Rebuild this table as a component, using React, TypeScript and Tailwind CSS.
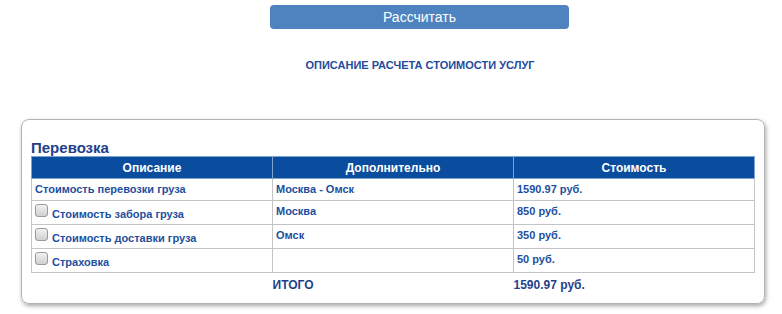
import React from "react";

const Box = () => (
  <span className="inline-block w-[13px] h-[13px] rounded-[3px] border border-[#9a9a9a] bg-gradient-to-b from-[#f2f2f2] to-[#cfcfcf] align-[1px] mr-[4px]" />
);

export default function App() {
  const cell = "border border-[#c4c4c4] px-[3px] text-[11px] font-bold text-[#1d4f9e]";
  return (
    <div className="w-[782px] h-[314px] bg-white overflow-hidden" style={{ fontFamily: '"Liberation Sans", Arial, sans-serif' }}>
      <div className="pt-[5px] pl-[270px]">
        <button className="w-[299px] h-[24px] rounded-[4px] bg-[#4e83bf] text-white text-[14px] leading-[24px] flex items-center justify-center">
          Рассчитать
        </button>
        <div className="w-[300px] text-center mt-[30px] text-[11px] font-bold text-[#1f4c9c] leading-[13px]">
          ОПИСАНИЕ РАСЧЕТА СТОИМОСТИ УСЛУГ
        </div>
      </div>
      <div className="ml-[21px] mt-[47px] w-[744px] h-[185px] border border-[#b4b4b4] rounded-[8px] shadow-[1px_2px_4px_rgba(0,0,0,0.35)] px-[9px] pt-[19px]">
        <div className="text-[15px] font-bold text-[#213f8c] leading-[17px]">Перевозка</div>
        <table className="w-[723px] border-collapse table-fixed">
          <colgroup>
            <col className="w-[241px]" />
            <col className="w-[241px]" />
            <col className="w-[241px]" />
          </colgroup>
          <thead>
            <tr className="h-[22px] bg-[#0a4d9e] text-white text-[12px] font-bold">
              <th className="border border-[#7fa3cf] font-bold">Описание</th>
              <th className="border border-[#7fa3cf] font-bold">Дополнительно</th>
              <th className="border border-[#7fa3cf] font-bold">Стоимость</th>
            </tr>
          </thead>
          <tbody>
            <tr className="h-[22px]">
              <td className={cell}>Стоимость перевозки груза</td>
              <td className={cell}>Москва - Омск</td>
              <td className={cell}>1590.97 руб.</td>
            </tr>
            <tr className="h-[24px]">
              <td className={cell + " align-top pt-[3px]"}><Box />Стоимость забора груза</td>
              <td className={cell + " align-top pt-[2px]"}>Москва</td>
              <td className={cell + " align-top pt-[2px]"}>850 руб.</td>
            </tr>
            <tr className="h-[24px]">
              <td className={cell + " align-top pt-[3px]"}><Box />Стоимость доставки груза</td>
              <td className={cell + " align-top pt-[2px]"}>Омск</td>
              <td className={cell + " align-top pt-[2px]"}>350 руб.</td>
            </tr>
            <tr className="h-[24px]">
              <td className={cell + " align-top pt-[3px]"}><Box />Страховка</td>
              <td className={cell + " align-top pt-[2px]"}></td>
              <td className={cell + " align-top pt-[2px]"}>50 руб.</td>
            </tr>
            <tr className="h-[24px] text-[12px] font-bold text-[#1f3f8a]">
              <td></td>
              <td className="px-0">ИТОГО</td>
              <td className="px-0">1590.97 руб.</td>
            </tr>
          </tbody>
        </table>
      </div>
    </div>
  );
}
